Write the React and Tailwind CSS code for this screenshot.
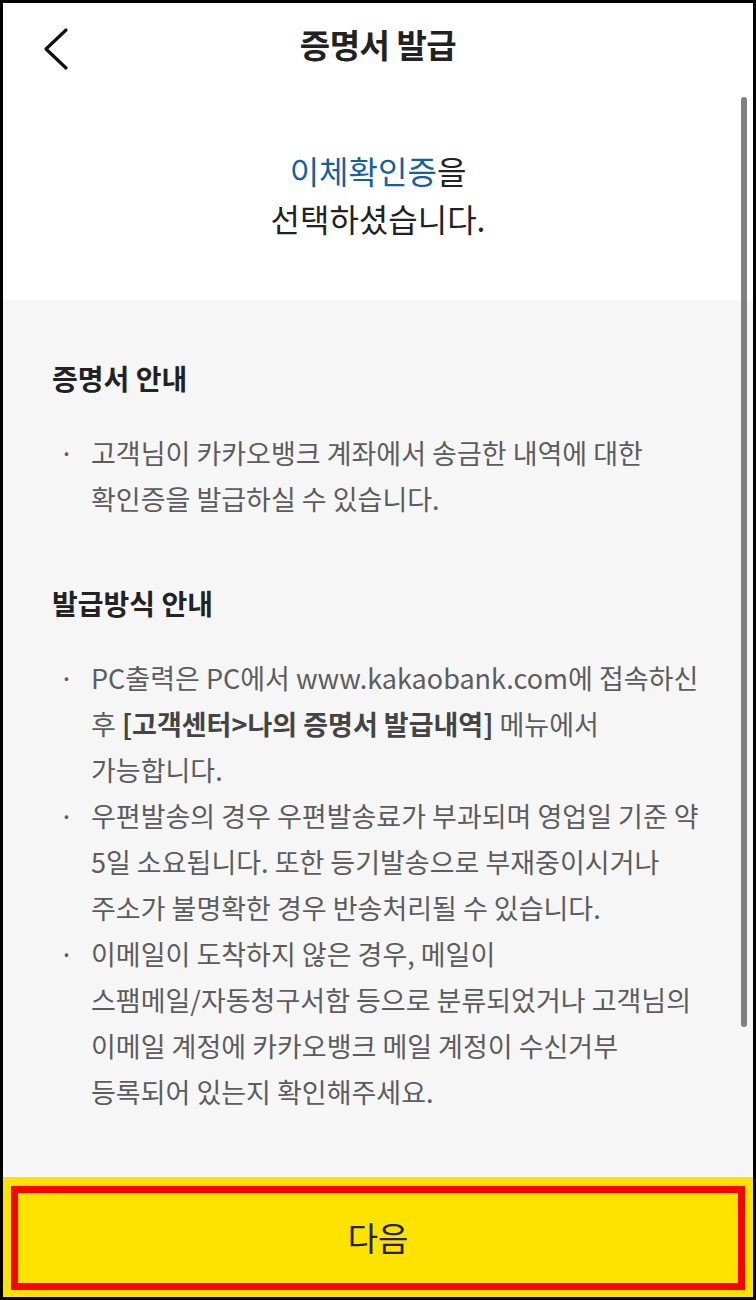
import React from "react";

const bullets1 = [
  ["고객님이 카카오뱅크 계좌에서 송금한 내역에 대한", "확인증을 발급하실 수 있습니다."]
];

function Bullet({ children }) {
  return (
    <li className="flex whitespace-nowrap">
      <span className="w-[39px] shrink-0 pl-[7px]">·</span>
      <div className="flex-1">{children}</div>
    </li>
  );
}

export default function App() {
  return (
    <div
      className="relative flex h-[1300px] w-[756px] flex-col overflow-hidden border-[3px] border-black bg-white"
      style={{ fontFamily: '"Noto Sans CJK KR", "Noto Sans", sans-serif' }}
    >
      {/* header */}
      <div className="relative flex h-[84px] shrink-0 items-center justify-center">
        <button className="absolute left-[36px] top-[22px] p-[2px]">
          <svg width="28" height="44" viewBox="0 0 28 44" fill="none">
            <path
              d="M25 3 L5 22 L25 41"
              stroke="#111"
              strokeWidth="3.2"
              strokeLinecap="round"
              strokeLinejoin="round"
            />
          </svg>
        </button>
        <h1 className="text-[33px] font-bold tracking-[-0.5px] text-[#222]">
          증명서 발급
        </h1>
      </div>

      {/* selected */}
      <div className="flex h-[213px] shrink-0 flex-col items-center pt-[59px] text-[32px] leading-[48px] text-[#222]">
        <p>
          <span className="text-[#17609f]">이체확인증</span>을
        </p>
        <p>선택하셨습니다.</p>
      </div>

      {/* info */}
      <div className="flex-1 bg-[#f6f6f6] pl-[49px] pr-[20px] pt-[60px]">
        <h2 className="text-[28px] font-bold leading-[36px] text-[#222]">
          증명서 안내
        </h2>
        <ul className="mt-[34px] text-[27px] leading-[46px] text-[#5c5c5c]">
          {bullets1.map((b, i) => (
            <Bullet key={i}>
              {b.map((line) => (
                <div key={line}>{line}</div>
              ))}
            </Bullet>
          ))}
        </ul>

        <h2 className="mt-[63px] text-[28px] font-bold leading-[36px] text-[#222]">
          발급방식 안내
        </h2>
        <ul className="mt-[34px] text-[27px] leading-[46px] text-[#5c5c5c]">
          <Bullet>
            <div>PC출력은 PC에서 www.kakaobank.com에 접속하신</div>
            <div>
              후 <b className="font-bold text-[#444]">[고객센터&gt;나의 증명서 발급내역]</b> 메뉴에서
            </div>
            <div>가능합니다.</div>
          </Bullet>
          <Bullet>
            <div>우편발송의 경우 우편발송료가 부과되며 영업일 기준 약</div>
            <div>5일 소요됩니다. 또한 등기발송으로 부재중이시거나</div>
            <div>주소가 불명확한 경우 반송처리될 수 있습니다.</div>
          </Bullet>
          <Bullet>
            <div>이메일이 도착하지 않은 경우, 메일이</div>
            <div>스팸메일/자동청구서함 등으로 분류되었거나 고객님의</div>
            <div>이메일 계정에 카카오뱅크 메일 계정이 수신거부</div>
            <div>등록되어 있는지 확인해주세요.</div>
          </Bullet>
        </ul>
      </div>

      {/* next button */}
      <div className="h-[120px] shrink-0 bg-[#ffe300] pb-[7px] pl-[8px] pr-[8px] pt-[9px]">
        <button className="flex h-full w-full items-center justify-center border-[7px] border-[#ff0000] text-[33px] text-[#222]">
          다음
        </button>
      </div>

      {/* scrollbar */}
      <div className="absolute right-[6px] top-[94px] h-[930px] w-[6px] rounded-full bg-[#808080]" />
    </div>
  );
}
